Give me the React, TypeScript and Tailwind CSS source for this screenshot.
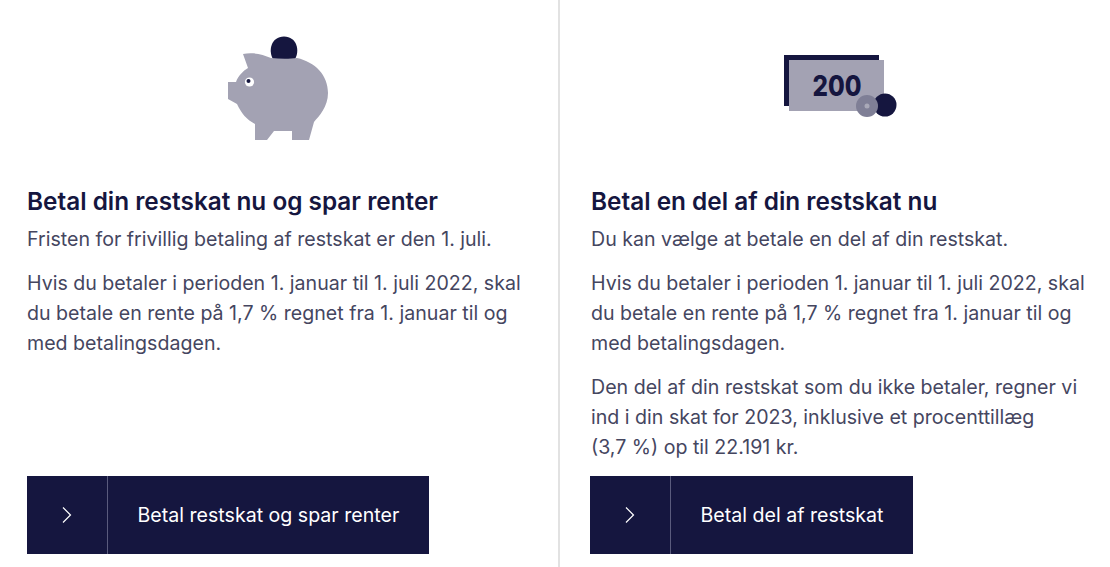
import React from "react";

const Pig = () => (
  <svg width="140" height="125" viewBox="0 0 140 125" className="block">
    <path d="M63 34 C58 26 61 11.5 74 11.5 C87 11.5 90 26 85 34 Z" fill="#15163f" />
    <path d="M18 57 L26 57 C28 51 33 46 38 43 L33 29 C42 27 52 29 61 33 C70 34 80 34 87 33 C105 37 118 50 118 68 C118 82 109 91 104 97 L99 115 L82 115 L82 106 L64 106 L57 115 L45 115 L45 99 C37 95 31 88 27 79 L18 74 Z" fill="#a3a2b3" />
    <circle cx="39.5" cy="57" r="4.6" fill="#ffffff" />
    <circle cx="38.5" cy="56" r="2" fill="#15163f" />
  </svg>
);

const Bill = () => (
  <svg width="140" height="90" viewBox="0 0 140 90" className="block">
    <path d="M14 15 H109 V20 H19 V66 H14 Z" fill="#15163f" />
    <rect x="19" y="20" width="95" height="51" fill="#a3a2b3" />
    <text x="67" y="56" textAnchor="middle" textLength="49" lengthAdjust="spacingAndGlyphs" fontFamily="'Inter', sans-serif" fontWeight="800" fontSize="28" fill="#15163f">200</text>
    <circle cx="115" cy="65" r="11.5" fill="#15163f" />
    <circle cx="97" cy="66" r="11" fill="#7f7f96" />
    <circle cx="97" cy="66" r="2.5" fill="#a9a9b8" />
  </svg>
);

const Chevron = () => (
  <svg width="12" height="18" viewBox="0 0 12 18" fill="none" stroke="#ffffff" strokeWidth="1.2">
    <path d="M2 1.5 L9.5 9 L2 16.5" />
  </svg>
);

const Button = ({ label }: { label: string }) => (
  <a className="flex h-[78px] w-fit items-stretch bg-[#15163f] text-white">
    <span className="flex w-[81px] items-center justify-center border-r border-[#5a5b7d]">
      <Chevron />
    </span>
    <span className="flex items-center px-[29.5px] pt-[1px] text-[19.6px] font-normal">{label}</span>
  </a>
);

export default function App() {
  return (
    <div className="flex h-[567px] w-[1110px] overflow-hidden bg-white font-['Inter',sans-serif] text-[#45465f]">
      <section className="flex w-[560px] flex-col border-r-2 border-[#e2e2e2] pb-[13px] pl-[27px]">
        <div className="flex h-[185px] justify-center pr-[25px] pt-[25px]">
          <Pig />
        </div>
        <h2 className="text-[24.35px] leading-[32px] font-semibold text-[#15163f]">Betal din restskat nu og spar renter</h2>
        <p className="mt-[7px] text-[19.6px] leading-[30px]">Fristen for frivillig betaling af restskat er den 1. juli.</p>
        <p className="mt-[14px] text-[19.6px] leading-[30px]">
          Hvis du betaler i perioden 1. januar til 1. juli 2022, skal<br />
          du betale en rente på 1,7 % regnet fra 1. januar til og<br />
          med betalingsdagen.
        </p>
        <div className="mt-auto">
          <Button label="Betal restskat og spar renter" />
        </div>
      </section>
      <section className="flex w-[550px] flex-col pb-[13px] pl-[30px]">
        <div className="flex h-[185px] justify-center pr-[20px] pt-[40px]">
          <Bill />
        </div>
        <h2 className="pl-[1px] text-[24.35px] leading-[32px] font-semibold text-[#15163f]">Betal en del af din restskat nu</h2>
        <p className="mt-[7px] pl-[1px] text-[19.6px] leading-[30px]">Du kan vælge at betale en del af din restskat.</p>
        <p className="mt-[14px] pl-[1px] text-[19.6px] leading-[30px]">
          Hvis du betaler i perioden 1. januar til 1. juli 2022, skal<br />
          du betale en rente på 1,7 % regnet fra 1. januar til og<br />
          med betalingsdagen.
        </p>
        <p className="mt-[14px] pl-[1px] text-[19.6px] leading-[30px]">
          Den del af din restskat som du ikke betaler, regner vi<br />
          ind i din skat for 2023, inklusive et procenttillæg<br />
          (3,7 %) op til 22.191 kr.
        </p>
        <div className="mt-auto">
          <Button label="Betal del af restskat" />
        </div>
      </section>
    </div>
  );
}
